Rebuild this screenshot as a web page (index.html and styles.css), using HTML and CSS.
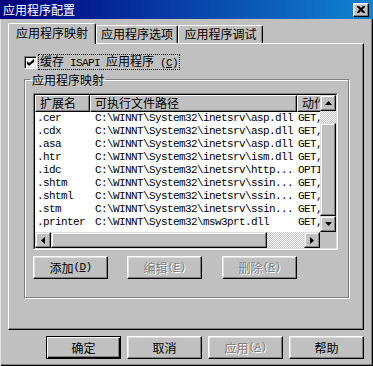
FILE: index.html
```html
<!DOCTYPE html>
<html lang="zh-CN">
<head>
  <meta charset="UTF-8" />
  <title>应用程序配置</title>
  <link rel="stylesheet" href="styles.css">
</head>
<body>
  <div class="window">
    <div class="titlebar">
      <span class="title">应用程序配置</span>
      <span class="close-btn">
        <svg width="8" height="7" viewBox="0 0 8 7"><path d="M0 0h2l2 2 2-2h2v1L5.5 3.5 8 6v1H6L4 5 2 7H0V6l2.5-2.5L0 1z" fill="#000"/></svg>
      </span>
    </div>

    <div class="tabs">
      <div class="tab tab-1 active">应用程序映射</div>
      <div class="tab tab-2">应用程序选项</div>
      <div class="tab tab-3">应用程序调试</div>
    </div>

    <div class="panel">
      <label class="check-row">
        <span class="checkbox">
          <svg width="7" height="7" viewBox="0 0 7 7"><path d="M0 2l2 2 5-4v3L2 7 0 5z" fill="#000"/></svg>
        </span>
        <span class="focus">缓存<span class="lat"> ISAPI </span>应用程序<span class="lat"> (<u>C</u>)</span></span>
      </label>

      <fieldset class="group">
        <legend>应用程序映射</legend>

        <div class="listview">
          <div class="listview-inner">
            <div class="list-body">
              <div class="list-header">
                <div class="hcell c1">扩展名</div>
                <div class="hcell c2">可执行文件路径</div>
                <div class="hcell c3">动作</div>
              </div>
              <div class="row"><span class="c1">.cer</span><span class="c2">C:\WINNT\System32\inetsrv\asp.dll</span><span class="c3">GET,</span></div>
              <div class="row"><span class="c1">.cdx</span><span class="c2">C:\WINNT\System32\inetsrv\asp.dll</span><span class="c3">GET,</span></div>
              <div class="row"><span class="c1">.asa</span><span class="c2">C:\WINNT\System32\inetsrv\asp.dll</span><span class="c3">GET,</span></div>
              <div class="row"><span class="c1">.htr</span><span class="c2">C:\WINNT\System32\inetsrv\ism.dll</span><span class="c3">GET,</span></div>
              <div class="row"><span class="c1">.idc</span><span class="c2">C:\WINNT\System32\inetsrv\http...</span><span class="c3">OPTI</span></div>
              <div class="row"><span class="c1">.shtm</span><span class="c2">C:\WINNT\System32\inetsrv\ssin...</span><span class="c3">GET,</span></div>
              <div class="row"><span class="c1">.shtml</span><span class="c2">C:\WINNT\System32\inetsrv\ssin...</span><span class="c3">GET,</span></div>
              <div class="row"><span class="c1">.stm</span><span class="c2">C:\WINNT\System32\inetsrv\ssin...</span><span class="c3">GET,</span></div>
              <div class="row"><span class="c1">.printer</span><span class="c2">C:\WINNT\System32\msw3prt.dll</span><span class="c3">GET,</span></div>
            </div>

            <div class="vscroll">
              <div class="arrow"><svg width="7" height="4" viewBox="0 0 7 4"><path d="M3.5 0L7 4H0z"/></svg></div>
              <div class="track-gap"></div>
              <div class="thumb"></div>
              <div class="arrow"><svg width="7" height="4" viewBox="0 0 7 4"><path d="M0 0h7L3.5 4z"/></svg></div>
            </div>

            <div class="hscroll">
              <div class="arrow"><svg width="4" height="7" viewBox="0 0 4 7"><path d="M4 0v7L0 3.5z"/></svg></div>
              <div class="thumb hthumb"></div>
              <div class="track-fill"></div>
              <div class="arrow"><svg width="4" height="7" viewBox="0 0 4 7"><path d="M0 0l4 3.5L0 7z"/></svg></div>
            </div>

            <div class="corner"></div>
          </div>
        </div>

        <div class="group-buttons">
          <button class="btn">添加<span class="lat">(<u>D</u>)</span></button>
          <button class="btn" disabled>编辑<span class="lat"> (<u>E</u>)</span></button>
          <button class="btn" disabled>删除<span class="lat"> (<u>R</u>)</span></button>
        </div>
      </fieldset>
    </div>

    <div class="dialog-buttons">
      <button class="btn default">确定</button>
      <button class="btn">取消</button>
      <button class="btn" disabled>应用<span class="lat"> (<u>A</u>)</span></button>
      <button class="btn">帮助</button>
    </div>
  </div>
</body>
</html>
```

FILE: styles.css
```css
/*
  ---------------------
  GLOBAL
  ---------------------
*/
* {
  margin: 0;
  padding: 0;
  box-sizing: border-box;
}

body {
  background: #c0c0c0;
  font-family: "Noto Sans CJK SC", "Liberation Sans", sans-serif;
  font-size: 12px;
  line-height: 13px;
  color: #000;
}

.lat {
  font-family: "Liberation Mono", "Noto Sans CJK SC", monospace;
  font-size: 11px;
  letter-spacing: -0.6px;
}

.window {
  width: 373px;
  height: 366px;
  background: #c0c0c0;
  box-shadow: inset 1px 0 0 #dfdfdf, inset -1px -1px 0 #000, inset -2px -2px 0 #808080;
  overflow: hidden;
}

/*
  ---------------------
  TITLE BAR
  ---------------------
*/
.titlebar {
  height: 19px;
  display: flex;
  align-items: center;
  justify-content: space-between;
  padding: 0 4px 0 3px;
  background: linear-gradient(to right, #000080, #1084d0);
  color: #fff;
}

.close-btn {
  width: 16px;
  height: 14px;
  display: flex;
  align-items: center;
  justify-content: center;
  background: #c0c0c0;
  border: 1px solid;
  border-color: #fff #000 #000 #fff;
  box-shadow: inset -1px -1px 0 #808080, inset 1px 1px 0 #dfdfdf;
}

/*
  ---------------------
  TABS
  ---------------------
*/
.tabs {
  display: flex;
  align-items: flex-end;
  height: 24px;
  padding-left: 8px;
}

.tab {
  height: 18px;
  background: #c0c0c0;
  border-top: 1px solid #fff;
  border-left: 1px solid #fff;
  border-right: 1px solid #000;
  border-radius: 2px 2px 0 0;
  box-shadow: inset -1px 0 0 #808080;
  text-align: center;
  line-height: 16px;
}

.tab-1 { width: 88px; }
.tab-2 { width: 82px; }
.tab-3 { width: 85px; }

.tab.active {
  height: 21px;
  margin-bottom: -1px;
  position: relative;
  z-index: 1;
  line-height: 17px;
}

/*
  ---------------------
  PANEL
  ---------------------
*/
.panel {
  width: 356px;
  height: 287px;
  margin-left: 8px;
  border: 1px solid;
  border-color: #fff #000 #000 #fff;
  box-shadow: inset -1px -1px 0 #808080;
  padding: 11px 0 0 15px;
}

.check-row {
  display: flex;
  align-items: center;
  height: 14px;
}

.checkbox {
  width: 13px;
  height: 13px;
  display: flex;
  align-items: center;
  justify-content: center;
  background: #fff;
  border: 1px solid;
  border-color: #808080 #fff #fff #808080;
  box-shadow: inset 1px 1px 0 #000, inset -1px -1px 0 #dfdfdf;
}

.focus {
  margin-left: 1px;
  padding: 0 1px;
  border: 1px dotted #000;
  line-height: 12px;
  white-space: nowrap;
}

/*
  ---------------------
  GROUP BOX
  ---------------------
*/
.group {
  width: 325px;
  margin-top: 4px;
  padding: 7px 9px 18px 8px;
  border: 1px solid #808080;
  box-shadow: 1px 1px 0 #fff, inset 1px 1px 0 #fff;
}

.group legend {
  margin-left: -3px;
  padding: 0 2px;
  line-height: 13px;
}

/*
  ---------------------
  LIST VIEW
  ---------------------
*/
.listview {
  width: 305px;
  height: 157px;
  border: 1px solid;
  border-color: #808080 #fff #fff #808080;
}

.listview-inner {
  height: 100%;
  border: 1px solid;
  border-color: #000 #dfdfdf #dfdfdf #000;
  display: grid;
  grid-template-columns: 285px 16px;
  grid-template-rows: 137px 16px;
  background: #fff;
}

.list-body {
  overflow: hidden;
  background: #fff;
}

.list-header {
  display: flex;
  height: 17px;
}

.c1 { width: 55px; flex-shrink: 0; }
.c2 { width: 207px; flex-shrink: 0; }
.c3 { width: 80px; flex-shrink: 0; }

.hcell {
  background: #c0c0c0;
  border: 1px solid;
  border-color: #fff #000 #000 #fff;
  box-shadow: inset -1px -1px 0 #808080;
  padding-left: 4px;
  line-height: 14px;
  white-space: nowrap;
}

.row {
  display: flex;
  height: 13px;
  line-height: 13px;
  white-space: nowrap;
  font-family: "Liberation Mono", monospace;
  font-size: 11px;
  letter-spacing: -0.6px;
}

.row .c1 { padding-left: 2px; }
.row .c2 { padding-left: 5px; }
.row .c3 { padding-left: 1px; }

/* Scroll bars */
.vscroll,
.hscroll,
.track-fill {
  display: flex;
  background: repeating-conic-gradient(#fff 0 25%, #c0c0c0 0 50%) 0 0 / 2px 2px;
}

.vscroll { flex-direction: column; }

.arrow,
.thumb {
  background: #c0c0c0;
  border: 1px solid;
  border-color: #dfdfdf #000 #000 #dfdfdf;
  box-shadow: inset -1px -1px 0 #808080, inset 1px 1px 0 #fff;
}

.arrow {
  width: 16px;
  height: 16px;
  flex-shrink: 0;
  display: flex;
  align-items: center;
  justify-content: center;
}

.track-gap { height: 12px; }
.vscroll .thumb { flex: 1; }
.hthumb { width: 216px; }
.track-fill { flex: 1; }

.corner { background: #c0c0c0; }

/*
  ---------------------
  BUTTONS
  ---------------------
*/
.btn {
  width: 75px;
  height: 23px;
  display: flex;
  align-items: center;
  justify-content: center;
  background: #c0c0c0;
  border: 1px solid;
  border-color: #fff #000 #000 #fff;
  box-shadow: inset -1px -1px 0 #808080, inset 1px 1px 0 #dfdfdf;
  font: inherit;
  color: #000;
  white-space: nowrap;
}

.btn:disabled {
  color: #808080;
  text-shadow: 1px 1px 0 #fff;
}

.btn.default {
  border-color: #000;
  box-shadow: inset 1px 1px 0 #fff, inset -1px -1px 0 #000, inset -2px -2px 0 #808080;
}

.group-buttons {
  display: flex;
  margin-top: 6px;
}

.group-buttons .btn + .btn { margin-left: 19px; }
.group-buttons .btn:last-child { margin-left: 20px; }

.dialog-buttons {
  display: flex;
  justify-content: flex-end;
  gap: 6px;
  margin-top: 6px;
  padding-right: 9px;
}
```
